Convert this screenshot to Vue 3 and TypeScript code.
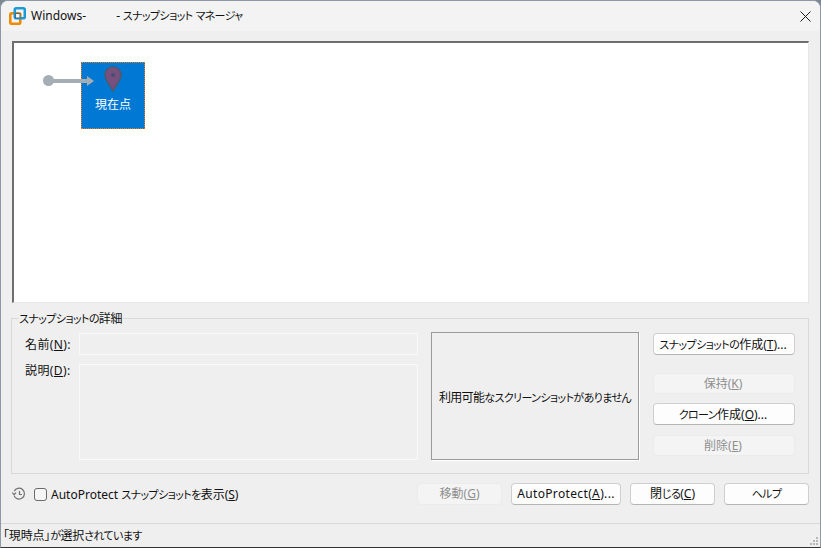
<script setup lang="ts">
import { h } from 'vue'
import type { FunctionalComponent } from 'vue'

interface Btn { label: string; key?: string; tail?: string; disabled?: boolean }
const sideTop: Btn = { label: 'スナップショットの作成', key: 'T', tail: '...' }
const sideRest: Btn[] = [
  { label: '保持', key: 'K', disabled: true },
  { label: 'クローン作成', key: 'O', tail: '...' },
  { label: '削除', key: 'E', disabled: true },
]
const bottom: Btn[] = [
  { label: '移動', key: 'G', disabled: true },
  { label: 'AutoProtect', key: 'A', tail: '...' },
  { label: '閉じる', key: 'C' },
  { label: 'ヘルプ' },
]

// The reference UI font has condensed kana: wrap each kana run so it can be narrowed.
const Jp: FunctionalComponent<{ s: string }> = (props) =>
  (props.s.match(/[\u3040-\u30ff]+|[^\u3040-\u30ff]+/g) ?? []).map((run) =>
    /[\u3040-\u30ff]/.test(run) ? h('span', { class: 'kana' }, run) : run,
  )
Jp.props = ['s']
</script>

<template>
  <div class="window">
    <header class="titlebar">
      <svg class="logo" width="17" height="18" viewBox="0 0 17 18">
        <rect x="1.3" y="6.3" width="10" height="10.4" rx="1.5" fill="none" stroke="#f08a00" stroke-width="2.6" />
        <rect x="5.8" y="1.3" width="10" height="10" rx="1.5" fill="none" stroke="#1c9ad6" stroke-width="2.6" />
        <rect x="6.5" y="6.5" width="4.5" height="4.5" fill="#f6f6f6" stroke="#3f6f88" stroke-width="1" />
      </svg>
      <span class="title">Windows-</span>
      <span class="title title-rest"><Jp s="- スナップショット マネージャ" /></span>
      <svg class="close" width="11" height="11" viewBox="0 0 11 11">
        <path d="M0.5 0.5 L10.5 10.5 M10.5 0.5 L0.5 10.5" stroke="#1a1a1a" stroke-width="1" fill="none" />
      </svg>
    </header>

    <main class="content">
      <section class="tree">
        <div class="node">
          <svg class="pin" width="18" height="26" viewBox="0 0 18 26">
            <path d="M9 1 C4.4 1 1 4.4 1 9 C1 14 6 19 9 25 C12 19 17 14 17 9 C17 4.4 13.6 1 9 1 Z" fill="#77507f" stroke="#4f5a6b" stroke-width="1.6" />
            <circle cx="9" cy="9" r="2" fill="#45506a" />
          </svg>
          <span class="node-label">現在点</span>
        </div>
        <div class="link">
          <span class="dot"></span>
          <span class="line"></span>
          <span class="head"></span>
        </div>
      </section>

      <fieldset class="details">
        <legend><span class="legend-text"><Jp s="スナップショットの詳細" /></span></legend>
        <div class="form">
          <label class="form-label">名前(<u>N</u>):</label>
          <div class="field field-name"></div>
          <label class="form-label desc-label">説明(<u>D</u>):</label>
          <div class="field field-desc"></div>
        </div>
        <div class="shot"><span class="shot-text"><Jp s="利用可能なスクリーンショットがありません" /></span></div>
        <div class="side">
          <button class="btn side-first"><Jp :s="sideTop.label" />(<u>{{ sideTop.key }}</u>){{ sideTop.tail }}</button>
          <button v-for="b in sideRest" :key="b.label" class="btn" :class="{ off: b.disabled }">
            <Jp :s="b.label" />(<u>{{ b.key }}</u>){{ b.tail }}
          </button>
        </div>
      </fieldset>

      <div class="actions">
        <svg class="history" width="14" height="14" viewBox="0 0 14 14" fill="none" stroke="#6f6f6f" stroke-width="1.2">
          <path d="M2.2 4.2 A5.4 5.4 0 1 1 2 8.6" />
          <path d="M0.3 5.6 L2.2 7.6 L4.1 5.6" />
          <path d="M7.5 4 V7.5 H10" />
        </svg>
        <label class="check"><span class="box"></span><span>AutoProtect <Jp s="スナップショットを表示" />(<u>S</u>)</span></label>
        <div class="bottom-btns">
          <button v-for="b in bottom" :key="b.label" class="btn" :class="{ off: b.disabled, wide: b.label === 'AutoProtect' }">
            <Jp :s="b.label" /><template v-if="b.key">(<u>{{ b.key }}</u>)</template>{{ b.tail }}
          </button>
        </div>
      </div>
    </main>

    <footer class="status">
      <span class="status-text"><Jp s="「現時点」が選択されています" /></span>
      <svg class="grip" width="10" height="10" viewBox="0 0 10 10" fill="#b8b8b8">
        <rect x="7" y="1" width="2" height="2" /><rect x="4" y="4" width="2" height="2" /><rect x="7" y="4" width="2" height="2" />
        <rect x="1" y="7" width="2" height="2" /><rect x="4" y="7" width="2" height="2" /><rect x="7" y="7" width="2" height="2" />
      </svg>
    </footer>
  </div>
</template>

<style scoped>
.window {
  width: 821px;
  height: 548px;
  box-sizing: border-box;
  display: flex;
  flex-direction: column;
  background: #efefef;
  border: 1px solid #8d9aa6;
  border-bottom-color: #333;
  border-radius: 8px 8px 0 0;
  font-family: "Noto Sans", "Noto Sans CJK JP", sans-serif;
  font-size: 12px;
  font-feature-settings: "palt";
  color: #111;
  overflow: hidden;
}
.titlebar {
  height: 30px;
  flex: none;
  display: flex;
  align-items: center;
  background: #f3f3f3;
  padding: 0 9px 0 8px;
}
.logo { margin-right: 5px; }
.title { line-height: 16px; }
.title-rest { margin-left: 30px; letter-spacing: -0.2px; }
.close { margin-left: auto; }
.content {
  flex: 1;
  display: flex;
  flex-direction: column;
  padding: 10px 11px 0 10px;
  min-height: 0;
}
.tree {
  position: relative;
  height: 262px;
  width: 797px;
  flex: none;
  box-sizing: border-box;
  margin-left: 1px;
  background: #fff;
  border: 1px solid #e6e6e6;
  border-top: 2px solid #6e6e6e;
  border-left: 2px solid #6e6e6e;
}
.link {
  position: absolute;
  left: 29px;
  top: 32px;
  display: flex;
  align-items: center;
}
.dot {
  width: 11px;
  height: 11px;
  border-radius: 50%;
  background: #a5adb5;
}
.line {
  width: 34px;
  height: 4px;
  margin-left: -1px;
  background: #a5adb5;
}
.head {
  width: 0;
  height: 0;
  border-left: 7px solid #a5adb5;
  border-top: 5px solid transparent;
  border-bottom: 5px solid transparent;
}
.node {
  position: absolute;
  left: 67px;
  top: 19px;
  width: 64px;
  height: 67px;
  box-sizing: border-box;
  background: #0078d4;
  border: 1px dotted #f07a10;
  display: flex;
  flex-direction: column;
  align-items: center;
  padding-top: 3px;
}
.node-label {
  color: #fff;
  font-size: 12px;
  line-height: 16px;
  margin-top: 5px;
}
.details {
  margin: 7px 0 0;
  padding: 7px 13px 11px 13px;
  height: 164px;
  box-sizing: border-box;
  border: 1px solid #d9d9d9;
  min-width: 0;
  width: 798px;
  display: grid;
  grid-template-columns: 393px 208px 142px;
  column-gap: 13px;
}
legend {
  padding: 2px 1px 0;
  margin-left: -7px;
  line-height: 14px;
  font-size: 12px;
}
.legend-text { letter-spacing: -0.4px; }
.form {
  display: grid;
  grid-template-columns: 54px 339px;
  grid-template-rows: 22px 96px;
  row-gap: 9px;
  align-self: start;
}
.form-label {
  line-height: 24px;
  white-space: nowrap;
  text-align: left;
  letter-spacing: 0.4px;
}
.desc-label { line-height: 14px; }
.field {
  box-sizing: border-box;
  border: 1px solid #f9f9f9;
  background: #efefef;
}
.shot {
  height: 128px;
  margin-top: -1px;
  padding-top: 1px;
  box-sizing: border-box;
  border: 1px solid #9a9a9a;
  box-shadow: 1px 1px 0 #fff;
  display: flex;
  align-items: center;
  justify-content: center;
  white-space: nowrap;
}
.shot-text { letter-spacing: -0.65px; }
.side {
  display: flex;
  flex-direction: column;
  gap: 9px;
  margin-left: 1px;
}
.side-first { margin-bottom: 9px; }
.btn {
  height: 22px;
  box-sizing: border-box;
  padding: 0;
  font: inherit;
  font-feature-settings: "palt";
  color: #111;
  background: #fdfdfd;
  border: 1px solid #cfcfcf;
  border-bottom-color: #b5b5b5;
  border-radius: 4px;
  white-space: nowrap;
  line-height: 18px;
}
.btn u { text-underline-offset: 1px; }
.btn.off {
  color: #8f8f8f;
  background: #f4f4f4;
  border-color: #ebebeb;
}
.side .btn { width: 142px; flex: none; padding: 1px 2px 0 0; }
.side .btn.off { height: 21px; }
.side .btn.off:last-child { margin-top: 1px; }
.actions {
  display: flex;
  align-items: center;
  height: 22px;
  margin-top: 9px;
  padding-left: 1px;
}
.history { margin-right: 8px; }
.check {
  display: flex;
  align-items: center;
  white-space: nowrap;
}
.box {
  width: 13px;
  height: 13px;
  box-sizing: border-box;
  border: 1px solid #6a6a6a;
  border-radius: 3px;
  background: #f6f6f6;
  margin-right: 4px;
}
.bottom-btns {
  margin-left: auto;
  display: flex;
  gap: 9px;
}
.bottom-btns .btn { width: 85px; }
.bottom-btns .btn.wide { width: 110px; letter-spacing: 0.35px; }
.status {
  height: 24px;
  flex: none;
  box-sizing: border-box;
  border-top: 1px solid #d9d9d9;
  display: flex;
  align-items: center;
  justify-content: space-between;
  padding: 1px 1px 0 2px;
  line-height: 16px;
}
.status-text { letter-spacing: -0.15px; }
.grip { align-self: flex-end; margin-bottom: 1px; }
</style>

<style>
html, body { margin: 0; background: #7a8894; }
.kana { font-size: 11px; letter-spacing: -0.6px; }
</style>
